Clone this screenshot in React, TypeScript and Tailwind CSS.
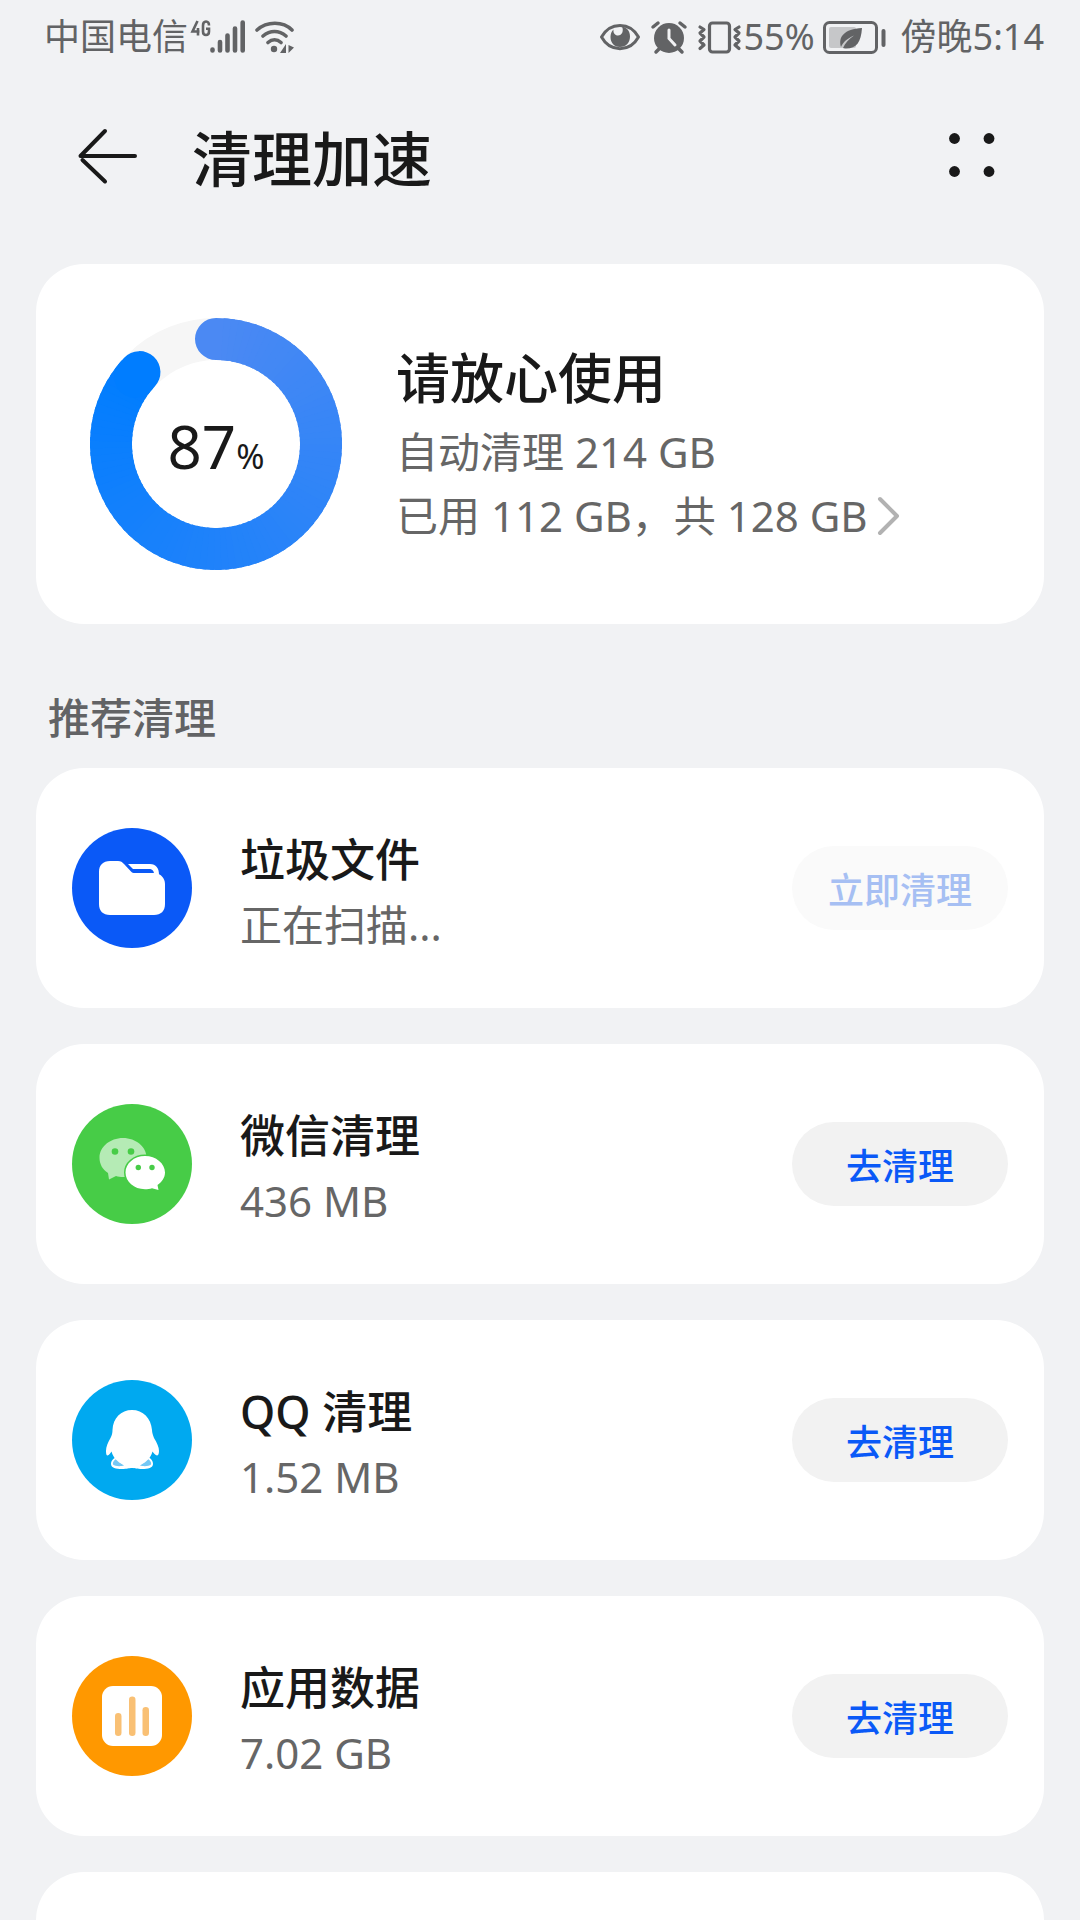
import React from 'react';

interface CleanItem {
    id: string;
    title: string;
    detail: string;
    action: string;
    disabled?: boolean;
    icon: React.ReactNode;
}

const FolderIcon = () => (
    <svg viewBox="0 0 120 120" className="size-[120px] shrink-0" aria-hidden="true">
        <circle cx="60" cy="60" r="60" fill="#0a59f7" />
        <path d="M56 36H78C84 36 87 40 87 47L82 46C82 42.500 80 41 77 41H61Z" fill="#fff" />
        <path d="M38 33H46C49 33 50 34 52 36L59 43.500C60 44.700 61 45 63 45H83C89 46 93 50 93 56V76C93 83 89 87 82 87H38C31 87 27 83 27 76V44C27 37 31 33 38 33Z" fill="#fff" />
    </svg>
);

const WechatIcon = () => (
    <svg viewBox="0 0 120 120" className="size-[120px] shrink-0" aria-hidden="true">
        <circle cx="60" cy="60" r="60" fill="#47cc47" />
        <path d="M51 34C64 34 74.500 43 74.500 53.500C74.500 64 64 73 51 73C48.500 73 46 72.700 44 72L37 75.500L36 69C30.500 65.500 27.500 60 27.500 53.500C27.500 43 38 34 51 34Z" fill="#b5ebb5" />
        <circle cx="43" cy="47.500" r="3.300" fill="#47cc47" />
        <circle cx="59" cy="47.500" r="3.300" fill="#47cc47" />
        <path d="M73 52C84 52 93 59.500 93 68.500C93 73.500 90 78 85.500 81L86.500 86L80 84.200C77.800 85 75.500 85.200 73 85.200C62 85.200 53.500 77.700 53.500 68.500C53.500 59.500 62 52 73 52Z" fill="#fff" stroke="#47cc47" strokeWidth="3" paintOrder="stroke" />
        <circle cx="66.300" cy="63.500" r="2.700" fill="#47cc47" />
        <circle cx="80" cy="63.500" r="2.700" fill="#47cc47" />
    </svg>
);

const QQIcon = () => (
    <svg viewBox="0 0 120 120" className="size-[120px] shrink-0" aria-hidden="true">
        <circle cx="60" cy="60" r="60" fill="#00a9f0" />
        <path d="M46 77C41 78 39 81 39 84C39 88 44 89 50 89C55 89 57 88 60 88C63 88 65 89 70 89C76 89 81 88 81 84C81 81 79 78 75 77Z" fill="#fff" />
        <path d="M44 79C41 81 40.500 83 41 84.500C43 86.500 49 86.500 52 85.500Z" fill="#74c8f5" />
        <path d="M76 79C79 81 79.500 83 79 84.500C77 86.500 71 86.500 68 85.500Z" fill="#74c8f5" />
        <path d="M60 30C71 30 79 38 80 50C80 53 81 55 82 58C85 63 87 67 87 71C87 74 86 75.500 85 75.500C83.500 75.500 81.500 73 80.500 71.500C79.500 75 78 77.500 76 79.500C72 84 67 86 60 86C53 86 48 84 44 79.500C42 77.500 40.500 75 39.500 71.500C38.500 73 37 75.500 35.500 75.500C34.500 75.500 34 74 34 71C34 67 36 62 38.500 58C40 55 40.500 53 40.500 50C41 38 49 30 60 30Z" fill="#fff" />
    </svg>
);

const DataIcon = () => (
    <svg viewBox="0 0 120 120" className="size-[120px] shrink-0" aria-hidden="true">
        <circle cx="60" cy="60" r="60" fill="#ff9800" />
        <rect x="30" y="30" width="60" height="60" rx="11" fill="#fff" />
        <g fill="#f9c074">
            <rect x="43" y="57" width="6.500" height="23" rx="3.200" />
            <rect x="57" y="40.500" width="6.500" height="39.500" rx="3.200" />
            <rect x="70.500" y="51" width="6.500" height="29" rx="3.200" />
        </g>
    </svg>
);

const ITEMS: CleanItem[] = [
    { id: 'junk', title: '垃圾文件', detail: '正在扫描...', action: '立即清理', disabled: true, icon: <FolderIcon /> },
    { id: 'wechat', title: '微信清理', detail: '436 MB', action: '去清理', icon: <WechatIcon /> },
    { id: 'qq', title: 'QQ 清理', detail: '1.52 MB', action: '去清理', icon: <QQIcon /> },
    { id: 'data', title: '应用数据', detail: '7.02 GB', action: '去清理', icon: <DataIcon /> },
];

const StatusBar = () => (
    <div className="flex h-[72px] shrink-0 items-center justify-between pl-11 pr-9 pt-0.5 text-[36px] leading-[48px] text-[#626365]">
        <div className="flex items-center">
            <span>中国电信</span>
            <svg width="106" height="36" viewBox="0 0 106 36" fill="none" stroke="currentColor" strokeLinecap="round" aria-hidden="true">
                {/* 4G */}
                <path d="M9.500 2L4.500 12.500H11.500M10 9V16.500M21 6.500C21 4 20 2.500 18 2.500C16 2.500 15 4 15 6.500V12.500C15 15 16 16 18 16C20 16 21 15 21 12.500V9.800H18" strokeWidth="2.600" strokeLinecap="butt" />
                {/* signal */}
                <path d="M24.500 30.500V31.500M32 23V31.500M39.500 16.500V31.500M47 9.500V31.500M54.700 3.500V31.500" strokeWidth="4.600" />
                {/* wifi */}
                <path d="M69 11C79 2 95 2 104 11M75 17C82 11 91 11 98 17M80 23.500C84 20 89 20 93 23.500" strokeWidth="3.600" />
                <circle cx="86" cy="30" r="3.200" fill="currentColor" stroke="none" />
                <path d="M98 25V34H92Z M100.500 26L106 28.500L100.500 34Z" fill="currentColor" stroke="none" />
            </svg>
        </div>
        <div className="flex items-center">
            <svg width="42" height="36" viewBox="0 0 42 36" aria-hidden="true">
                <path d="M2.500 18C11 2.500 31 2.500 39.500 18C31 33.500 11 33.500 2.500 18Z" fill="none" stroke="currentColor" strokeWidth="3" strokeLinejoin="round" />
                <path d="M23 7.500C28 8.500 31 12 31 17.500C31 24 26.500 28 21 28C15.500 28 11.500 24 11.500 18C11.500 15 12.500 12 14.500 10.500C14 14 16 16.500 19 16.500C23 16.500 25 12 23 7.500Z" fill="currentColor" />
            </svg>
            <svg width="48" height="36" viewBox="0 0 48 36" fill="none" stroke="currentColor" strokeLinecap="round" aria-hidden="true">
                <circle cx="28" cy="19" r="15" fill="currentColor" stroke="none" />
                <path d="M12 8L17 4M44 8L39 4M18 30L15 33M38 30L41 33" strokeWidth="3.500" />
                <path d="M28 11V19.500L34 26" stroke="#f1f2f4" strokeWidth="3" />
            </svg>
            <svg width="54" height="36" viewBox="0 0 54 36" fill="none" stroke="currentColor" strokeWidth="3.200" strokeLinecap="round" strokeLinejoin="round" aria-hidden="true">
                <rect x="20.500" y="4" width="20" height="29" rx="3" />
                <path d="M11 8L15 10.500L11 14L15 18L11 22L15 26L11 29.500M50 8L46 10.500L50 14L46 18L50 22L46 26L50 29.500" />
            </svg>
            <span>55%</span>
            <svg width="66" height="36" viewBox="0 0 66 36" className="ml-2" aria-hidden="true">
                <rect x="1.500" y="3.500" width="52" height="30" rx="5" fill="none" stroke="currentColor" strokeWidth="3" />
                <rect x="6" y="8" width="27" height="21" rx="2" fill="#c6c7c9" />
                <path d="M39 9C38 24 33 30 22 29.500L20 29C22 24 26 20 31 16.500C25 19 20 23 18 28C15 18 21 10 39 9Z" fill="currentColor" />
                <rect x="58.500" y="10" width="4" height="18" rx="2" fill="currentColor" />
            </svg>
            <span className="pl-3">傍晚5:14</span>
        </div>
    </div>
);

const RING_RADIUS = 105;
const RING_STEPS = 90;

const ringPoint = (fraction: number) => {
    const angle = fraction * Math.PI * 2;
    return `${126 + RING_RADIUS * Math.sin(angle)} ${126 - RING_RADIUS * Math.cos(angle)}`;
};

// Blends the soft blue at the top into the strong blue at the end of the arc
const ringColor = (t: number) =>
    `rgb(${Math.round(75 * (1 - t))}, ${Math.round(137 - 12 * t)}, ${Math.round(243 + 12 * t)})`;

const UsageRing: React.FC<{ percent: number }> = ({ percent }) => {
    const total = percent / 100;
    const steps = Array.from({ length: RING_STEPS }, (_, i) => i);

    return (
        <div className="relative size-[252px] shrink-0">
            <svg viewBox="0 0 252 252" className="size-full" fill="none" strokeWidth="42" aria-hidden="true">
                <circle cx="126" cy="126" r={RING_RADIUS} stroke="#f6f6f6" />
                {steps.map(i => {
                    const from = (i / RING_STEPS) * total;
                    const to = Math.min(((i + 1.5) / RING_STEPS) * total, total);
                    return (
                        <path
                            key={i}
                            d={`M${ringPoint(from)}A${RING_RADIUS} ${RING_RADIUS} 0 0 1 ${ringPoint(to)}`}
                            stroke={ringColor(i / (RING_STEPS - 1))}
                            strokeLinecap={i === 0 || i === RING_STEPS - 1 ? 'round' : 'butt'}
                        />
                    );
                })}
            </svg>
            <p className="absolute inset-0 flex items-baseline justify-center pt-[90px] leading-[76px] text-[#191919]">
                <span className="text-[60px]">{percent}</span>
                <span className="text-[34px]">%</span>
            </p>
        </div>
    );
};

const CleanCard: React.FC<{ item: CleanItem }> = ({ item }) => (
    <li className="flex h-[240px] shrink-0 items-center rounded-[48px] bg-white px-9">
        {item.icon}
        <div className="ml-12 flex-1 pt-2">
            <h3 className="text-[45px] font-medium leading-[66px] text-[#191919]">{item.title}</h3>
            <p className="text-[42px] leading-[64px] text-[#666666]">{item.detail}</p>
        </div>
        <button
            type="button"
            disabled={item.disabled}
            className="h-[84px] w-[216px] rounded-full bg-[#f2f2f2] pt-1.5 text-[36px] font-medium text-[#0a59f7] disabled:bg-[#fafafa] disabled:text-[#a6bff3]"
        >
            {item.action}
        </button>
    </li>
);

const App: React.FC = () => {
    return (
        <div className="flex h-screen flex-col overflow-hidden bg-[#f1f2f4] font-['Noto_Sans','Noto_Sans_CJK_SC',sans-serif]">
            <StatusBar />
            <header className="flex h-[168px] shrink-0 items-center px-[72px]">
                <button type="button" aria-label="返回" className="text-[#191919]">
                    <svg width="72" height="72" viewBox="0 0 72 72" fill="none" stroke="currentColor" strokeWidth="4" strokeLinecap="round" strokeLinejoin="round">
                        <path d="M63 36H8.500L33 11M10.500 40L33 61.500" />
                    </svg>
                </button>
                <h1 className="ml-12 flex-1 pt-1.5 text-[60px] font-medium leading-[84px] text-[#191919]">清理加速</h1>
                <button type="button" aria-label="更多" className="text-[#191919]">
                    <svg width="72" height="72" viewBox="0 0 72 72" fill="currentColor">
                        <circle cx="18.500" cy="18.500" r="5.400" />
                        <circle cx="53" cy="18.500" r="5.400" />
                        <circle cx="18.500" cy="51.500" r="5.400" />
                        <circle cx="53" cy="51.500" r="5.400" />
                    </svg>
                </button>
            </header>

            <main className="flex flex-col px-9 pt-6">
                <section className="flex h-[360px] shrink-0 items-center rounded-[48px] bg-white px-[54px]">
                    <UsageRing percent={87} />
                    <div className="ml-[54px] pb-1 text-[42px] leading-[64px] text-[#666666]">
                        <h2 className="text-[54px] font-medium leading-[84px] text-[#191919]">请放心使用</h2>
                        <p>自动清理 214 GB</p>
                        <a href="#storage" className="flex items-center">
                            已用 112 GB，共 128 GB
                            <svg width="34" height="40" viewBox="0 0 34 40" fill="none" stroke="#b2b2b2" strokeWidth="4" strokeLinecap="round" strokeLinejoin="round" aria-hidden="true">
                                <path d="M12 3L29 20L12 37" />
                            </svg>
                        </a>
                    </div>
                </section>

                <h2 className="px-3 pb-6 pt-[68px] text-[42px] font-medium leading-[52px] text-[#626365]">推荐清理</h2>

                <ul className="flex flex-col gap-9">
                    {ITEMS.map(item => (
                        <CleanCard key={item.id} item={item} />
                    ))}
                    <li className="h-[240px] shrink-0 rounded-[48px] bg-white" />
                </ul>
            </main>
        </div>
    );
};

export default App;
